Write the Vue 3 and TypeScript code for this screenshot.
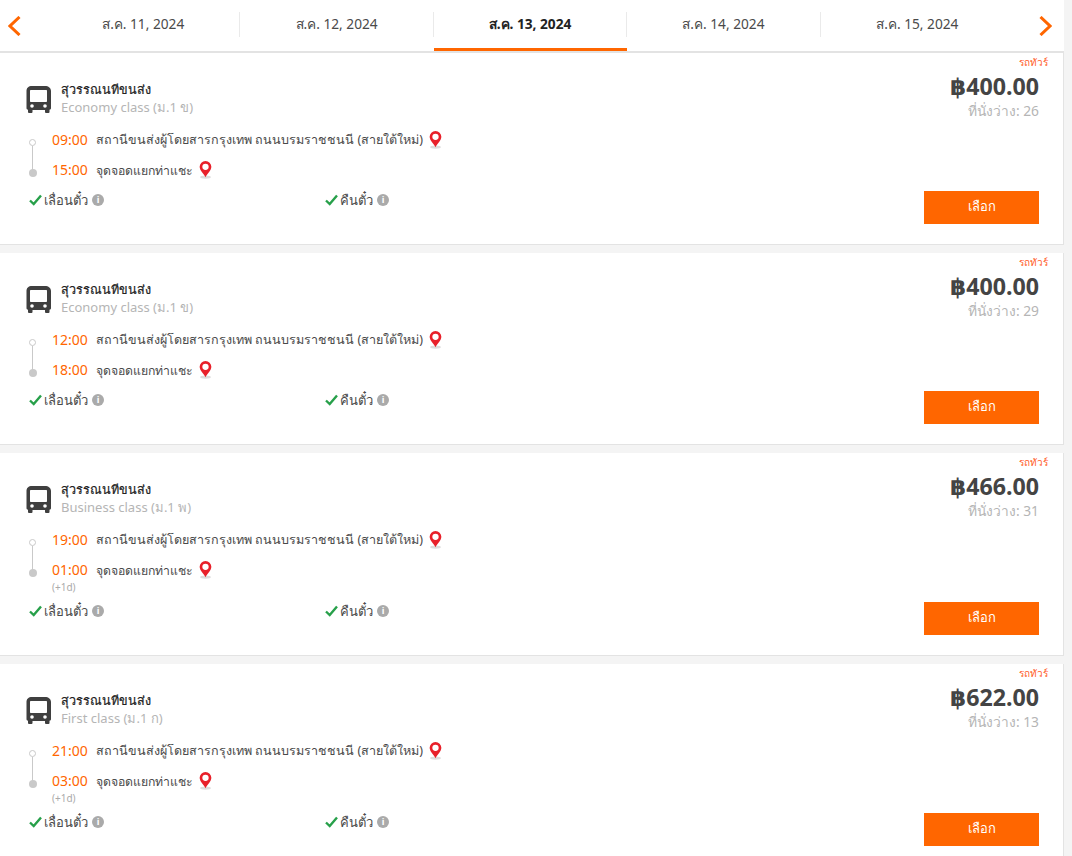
<template>
  <div class="page">
    <div class="date-bar">
      <button class="arrow left">
        <svg width="13" height="20" viewBox="0 0 13 20"><path d="M11.500 1 2 10l9.500 9" fill="none" stroke="#ff6600" stroke-width="3" /></svg>
      </button>
      <div class="tabs">
        <div v-for="d in dates" :key="d" class="tab" :class="{ active: d === activeDate }">
          <span>{{ d }}</span>
        </div>
      </div>
      <button class="arrow right">
        <svg width="13" height="20" viewBox="0 0 13 20"><path d="M1.500 1 11 10l-9.500 9" fill="none" stroke="#ff6600" stroke-width="3" /></svg>
      </button>
    </div>

    <div class="list">
      <div v-for="trip in trips" :key="trip.depart" class="card">
        <div class="tag">รถทัวร์</div>
        <div class="top">
          <div class="info">
            <div class="head">
              <svg class="bus" width="25" height="27" viewBox="0 0 25 27">
                <path fill="#3f3f3f" d="M6 0h13c3.500 0 6 2 6 5v17c0 1-.5 1.500-1.500 1.800V26a1 1 0 0 1-1 1h-2.500a1 1 0 0 1-1-1v-2H6.500v2a1 1 0 0 1-1 1H3a1 1 0 0 1-1-1v-2.200C1 23.500.500 23 .500 22V5C.500 2 2.500 0 6 0z" />
                <path fill="#fff" d="M5 4h15c.6 0 1 .4 1 1v10c0 .6-.4 1-1 1H5c-.6 0-1-.4-1-1V5c0-.6.4-1 1-1z" />
                <circle cx="6" cy="20" r="1.800" fill="#fff" />
                <circle cx="19" cy="20" r="1.800" fill="#fff" />
              </svg>
              <div>
                <div class="operator">สุวรรณนทีขนส่ง</div>
                <div class="class-name">{{ trip.className }}</div>
              </div>
            </div>
            <div class="route">
              <div class="stop">
                <span class="time">{{ trip.depart }}</span>
                <span class="place">สถานีขนส่งผู้โดยสารกรุงเทพ ถนนบรมราชชนนี (สายใต้ใหม่)</span>
                <svg class="pin" width="13" height="18" viewBox="0 0 14 20">
                  <ellipse cx="7" cy="17.800" rx="6" ry="1.800" fill="#ddd" />
                  <path fill="#e8202a" d="M7 0a6.500 6.500 0 0 1 6.500 6.500C13.500 10.500 9 14 7 18 5 14 .5 10.500.5 6.500A6.500 6.500 0 0 1 7 0z" />
                  <circle cx="7" cy="6.500" r="3.500" fill="#fff" />
                </svg>
              </div>
              <div class="stop">
                <span class="time">{{ trip.arrive }}</span>
                <span class="place">จุดจอดแยกท่าแชะ</span>
                <svg class="pin" width="13" height="18" viewBox="0 0 14 20">
                  <ellipse cx="7" cy="17.800" rx="6" ry="1.800" fill="#ddd" />
                  <path fill="#e8202a" d="M7 0a6.500 6.500 0 0 1 6.500 6.500C13.500 10.500 9 14 7 18 5 14 .5 10.500.5 6.500A6.500 6.500 0 0 1 7 0z" />
                  <circle cx="7" cy="6.500" r="3.500" fill="#fff" />
                </svg>
              </div>
              <div v-if="trip.nextDay" class="next-day">(+1d)</div>
            </div>
          </div>
          <div class="pricing">
            <div class="price">฿{{ trip.price }}</div>
            <div class="seats">ที่นั่งว่าง: {{ trip.seats }}</div>
          </div>
        </div>
        <div class="bottom">
          <div class="policy" v-for="p in policies" :key="p">
            <svg width="13" height="12" viewBox="0 0 13 12"><path d="M1 6.500 4.700 10 12 1.500" fill="none" stroke="#27a04a" stroke-width="2.400" /></svg>
            <span class="policy-text">{{ p }}</span>
            <span class="i">i</span>
          </div>
          <button class="select">เลือก</button>
        </div>
      </div>
    </div>
  </div>
</template>

<script setup lang="ts">
interface Trip {
  className: string
  depart: string
  arrive: string
  nextDay: boolean
  price: string
  seats: number
}

const activeDate = 'ส.ค. 13, 2024'
const dates = ['ส.ค. 11, 2024', 'ส.ค. 12, 2024', activeDate, 'ส.ค. 14, 2024', 'ส.ค. 15, 2024']
const policies = ['เลื่อนตั๋ว', 'คืนตั๋ว']

const trips: Trip[] = [
  { className: 'Economy class (ม.1 ข)', depart: '09:00', arrive: '15:00', nextDay: false, price: '400.00', seats: 26 },
  { className: 'Economy class (ม.1 ข)', depart: '12:00', arrive: '18:00', nextDay: false, price: '400.00', seats: 29 },
  { className: 'Business class (ม.1 พ)', depart: '19:00', arrive: '01:00', nextDay: true, price: '466.00', seats: 31 },
  { className: 'First class (ม.1 ก)', depart: '21:00', arrive: '03:00', nextDay: true, price: '622.00', seats: 13 }
]
</script>

<style>
html, body {
  margin: 0;
  height: 856px;
  overflow: hidden;
  background: #f4f4f4;
}
</style>

<style scoped>
.page {
  width: 1064px;
  font-family: "Noto Sans", "DejaVu Sans", sans-serif;
  font-size: 13px;
  color: #4a4a4a;
}

.date-bar {
  display: flex;
  height: 53px;
  box-sizing: border-box;
  background: #fff;
  border-bottom: 2px solid #e3e3e3;
}

.arrow {
  display: flex;
  align-items: center;
  padding: 0;
  border: 0;
  background: none;
  flex: none;
}

.arrow.left {
  width: 47px;
  padding-left: 8px;
  box-sizing: border-box;
}

.arrow.right {
  width: 50px;
  padding-left: 25px;
  box-sizing: border-box;
}

.tabs {
  display: flex;
  width: 967px;
}

.tab {
  flex: 1;
  height: 51px;
  box-sizing: border-box;
  padding-top: 12px;
  position: relative;
  text-align: center;
  font-size: 13.700px;
}

.tab span {
  display: block;
  height: 25px;
  line-height: 23px;
  border-right: 1px solid #eaeaea;
}

.tab:last-child span {
  border-right: 0;
}

.tab.active {
  font-weight: 700;
  color: #222;
  border-bottom: 3px solid #ff6600;
}

.card {
  position: relative;
  background: #fff;
  border-right: 1px solid #e3e3e3;
  border-bottom: 1px solid #e3e3e3;
  padding: 24px 24px 20px 26px;
  margin-bottom: 8px;
}

.tag {
  position: absolute;
  top: 2px;
  right: 15px;
  font-size: 10px;
  color: #ff5a1f;
}

.top {
  display: flex;
  justify-content: space-between;
}

.head {
  display: flex;
  align-items: center;
  gap: 10px;
  height: 40px;
}

.bus {
  flex: none;
  margin-top: 4px;
}

.operator {
  padding-top: 1px;
  font-size: 12.600px;
  line-height: 20px;
  color: #222;
  -webkit-text-stroke: 0.2px #222;
}

.class-name {
  margin-top: -1px;
  font-size: 13px;
  line-height: 17px;
  color: #b5b5b5;
}

.route {
  position: relative;
  margin-top: 8px;
  margin-bottom: 7px;
  padding-left: 26px;
}

.route::before {
  content: "";
  position: absolute;
  left: 3px;
  top: 14px;
  width: 5px;
  height: 5px;
  border: 1px solid #c9c9c9;
  border-radius: 50%;
}

.route::after {
  content: "";
  position: absolute;
  left: 2.500px;
  top: 44px;
  width: 8px;
  height: 8px;
  background: #c9c9c9;
  border-radius: 50%;
}

.stop {
  display: flex;
  align-items: center;
  height: 30px;
}

.route .stop:first-child::after {
  content: "";
  position: absolute;
  left: 6px;
  top: 21px;
  width: 1px;
  height: 24px;
  background: #c9c9c9;
}

.time {
  width: 44px;
  padding-bottom: 2px;
  font-size: 14px;
  color: #ff6600;
}

.place {
  font-size: 12.560px;
}

.stop:nth-child(2) .place {
  font-size: 12.250px;
}

.pin {
  margin-left: 6px;
  margin-top: -1px;
}

.next-day {
  font-size: 10px;
  line-height: 11px;
  margin-top: -3px;
  padding-bottom: 3px;
  color: #aaa;
}

.pricing {
  text-align: right;
}

.price {
  font-size: 23.200px;
  font-weight: 700;
  line-height: 28px;
  margin-top: -5px;
  margin-bottom: 1px;
  color: #444;
}

.seats {
  font-size: 13.800px;
  line-height: 20px;
  color: #b5b5b5;
}

.bottom {
  display: flex;
  align-items: flex-start;
  margin-top: -1px;
  padding-left: 3px;
}

.policy {
  display: flex;
  align-items: center;
  height: 18px;
  width: 296px;
}

.policy-text {
  margin-left: 2px;
}

.i {
  width: 12px;
  height: 12px;
  margin-left: 4px;
  border-radius: 50%;
  background: #aaa;
  color: #fff;
  font-size: 9px;
  font-weight: 700;
  line-height: 12px;
  text-align: center;
}

.select {
  margin-left: auto;
  width: 115px;
  height: 33px;
  padding: 0 0 2px;
  border: 0;
  background: #ff6600;
  color: #fff;
  font-family: inherit;
  font-size: 13px;
}
</style>
